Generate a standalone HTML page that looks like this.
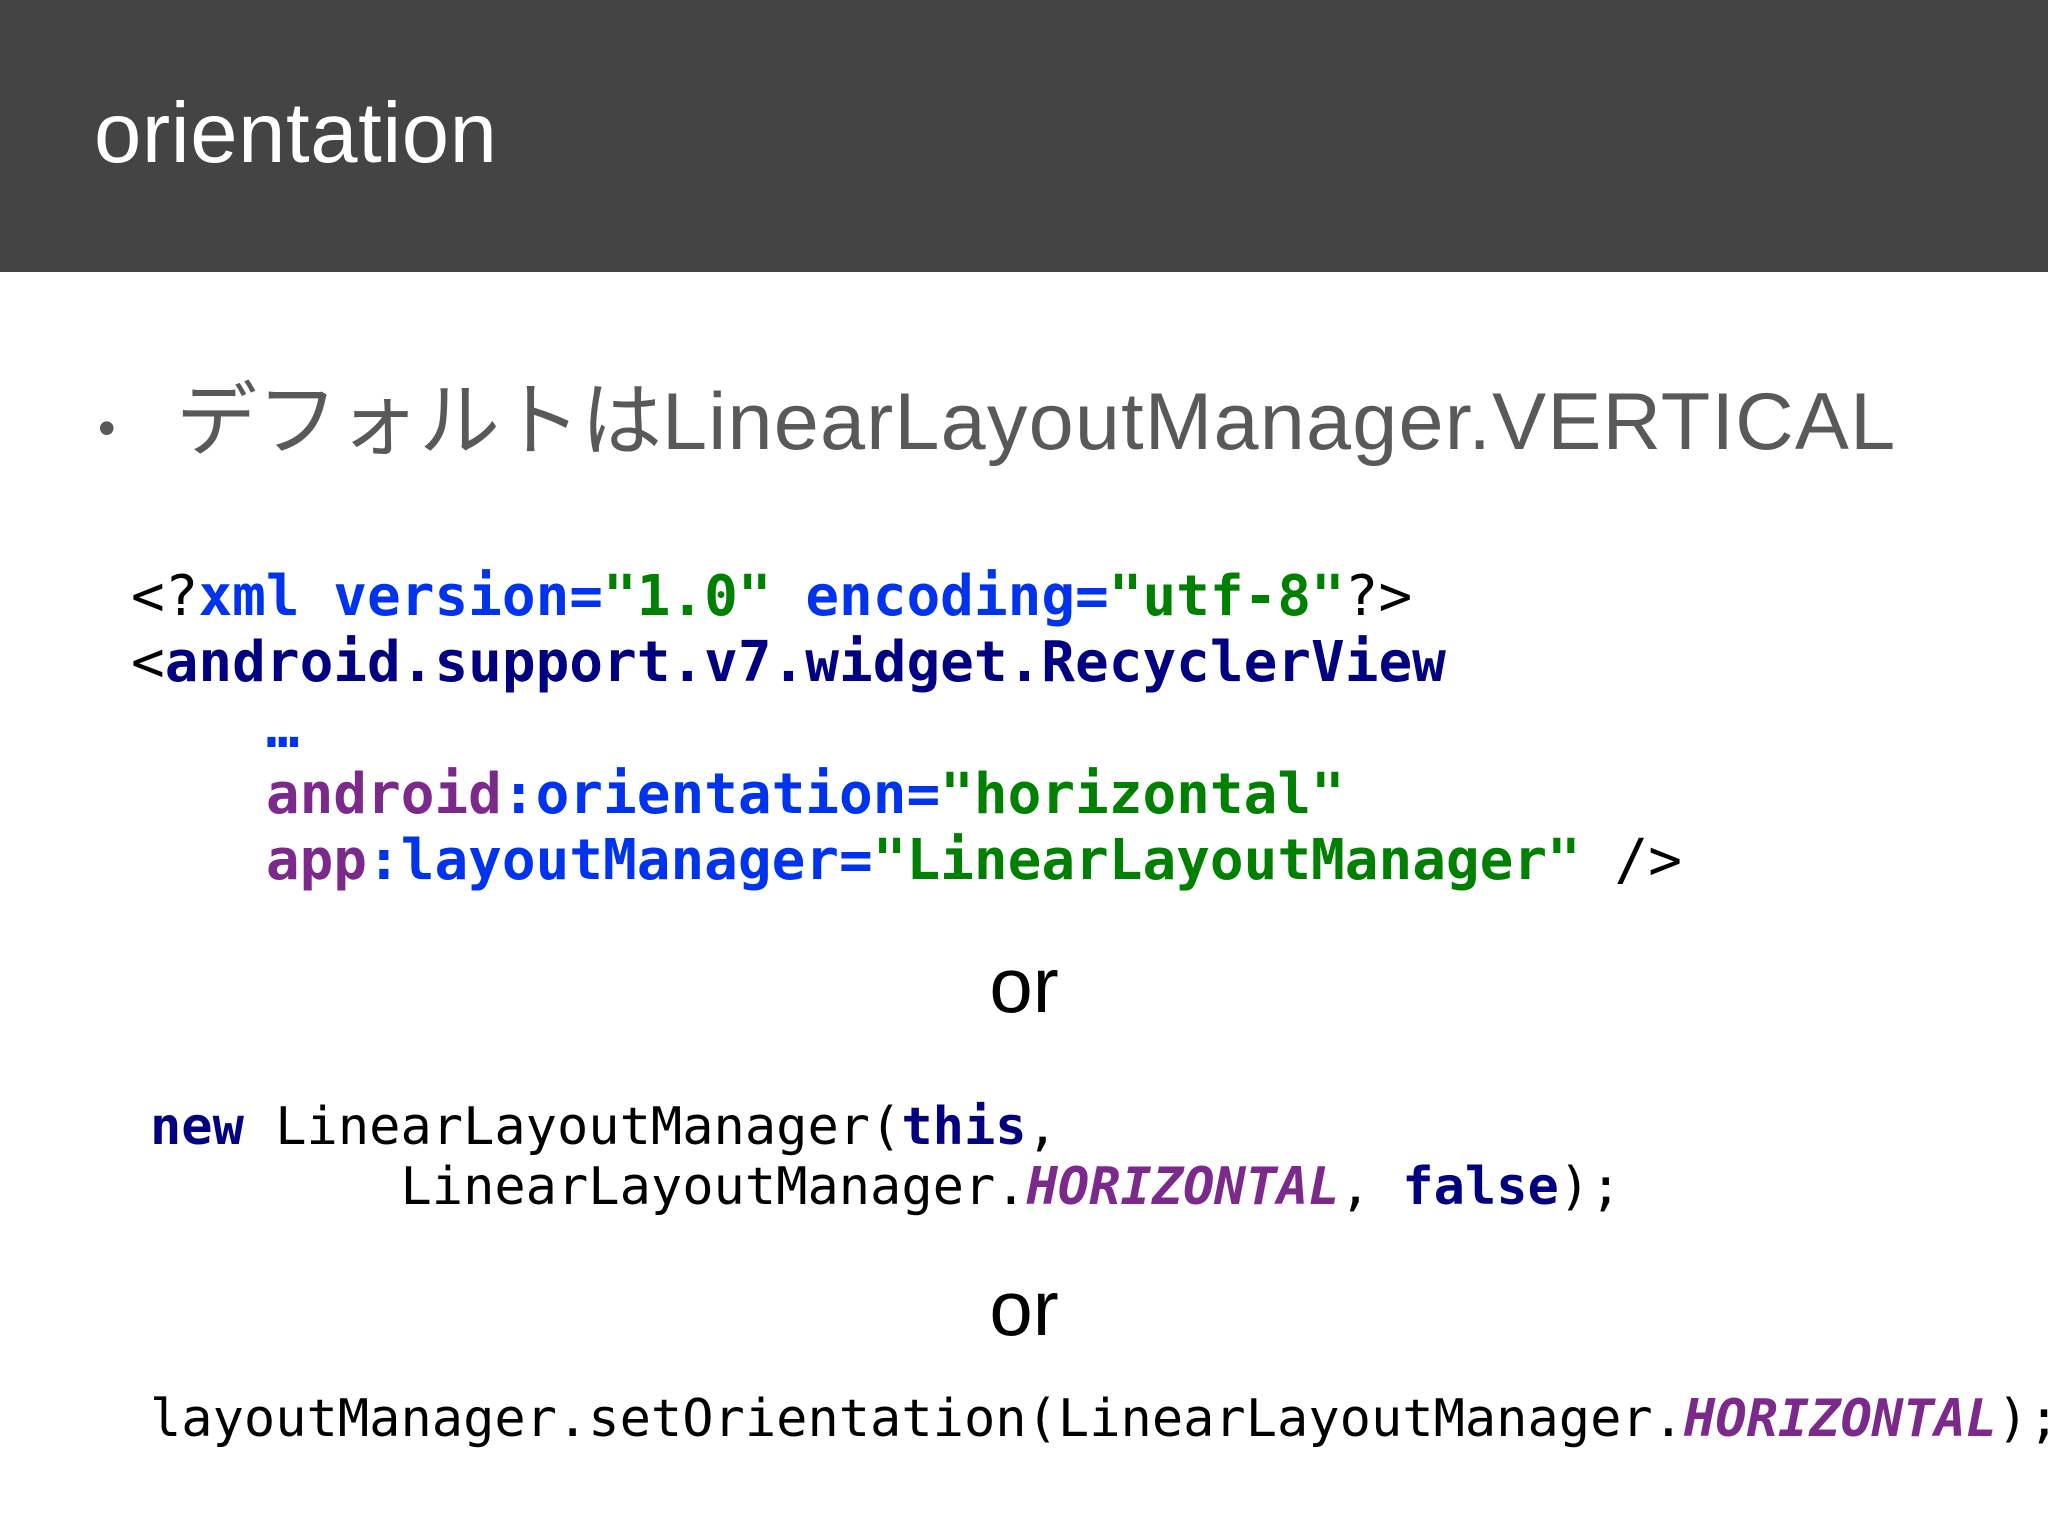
<!DOCTYPE html>
<html><head><meta charset="utf-8"><style>
html,body{margin:0;padding:0;}
body{width:2048px;height:1536px;position:relative;overflow:hidden;background:#fff;}
.hdr{position:absolute;left:0;top:0;width:2048px;height:272px;background:#444444;}
.t{position:absolute;white-space:pre;line-height:1;}
.title{left:94px;top:91px;font-family:"Liberation Sans",sans-serif;font-size:85px;color:#fff;letter-spacing:0.6px;}
.bul{left:98px;top:403px;font-family:"Liberation Sans",sans-serif;font-size:50px;color:#595959;}
.btxt{left:176px;top:382px;font-family:"Liberation Sans","Noto Sans CJK JP",sans-serif;font-size:81px;color:#595959;}
.lat{letter-spacing:1.2px;}
.code{font-family:"DejaVu Sans Mono","Liberation Mono",monospace;color:#000;}
.x{font-size:56px;left:131px;}
.j{font-size:52px;left:150px;}
.or{font-family:"Liberation Sans",sans-serif;font-size:78px;color:#000;left:0;width:2048px;text-align:center;}
.b{color:#0033ee;font-weight:bold}
.g{color:#008000;font-weight:bold}
.n{color:#000080;font-weight:bold}
.p{color:#7b2a8c;font-weight:bold}
.pi{color:#7b2a8c;font-weight:bold;font-style:italic}
</style></head><body>
<div class="hdr"></div>
<div class="t title">orientation</div>
<div class="t bul">•</div>
<div class="t btxt">デフォルトは<span class="lat">LinearLayoutManager.VERTICAL</span></div>

<div class="t code x" style="top:569px">&lt;?<span class="b">xml version=</span><span class="g">"1.0"</span> <span class="b">encoding=</span><span class="g">"utf-8"</span>?&gt;</div>
<div class="t code x" style="top:635px">&lt;<span class="n">android.support.v7.widget.RecyclerView</span></div>
<div class="t code x" style="top:701px">    <span class="b">…</span></div>
<div class="t code x" style="top:767px">    <span class="p">android</span><span class="b">:orientation=</span><span class="g">"horizontal"</span></div>
<div class="t code x" style="top:833px">    <span class="p">app</span><span class="b">:layoutManager=</span><span class="g">"LinearLayoutManager"</span> /&gt;</div>

<div class="t or" style="top:946px">or</div>

<div class="t code j" style="top:1101px"><span class="n">new</span> LinearLayoutManager(<span class="n">this</span>,</div>
<div class="t code j" style="top:1161px">        LinearLayoutManager.<span class="pi">HORIZONTAL</span>, <span class="n">false</span>);</div>

<div class="t or" style="top:1269px">or</div>

<div class="t code j" style="top:1393px">layoutManager.setOrientation(LinearLayoutManager.<span class="pi">HORIZONTAL</span>);</div>
</body></html>
